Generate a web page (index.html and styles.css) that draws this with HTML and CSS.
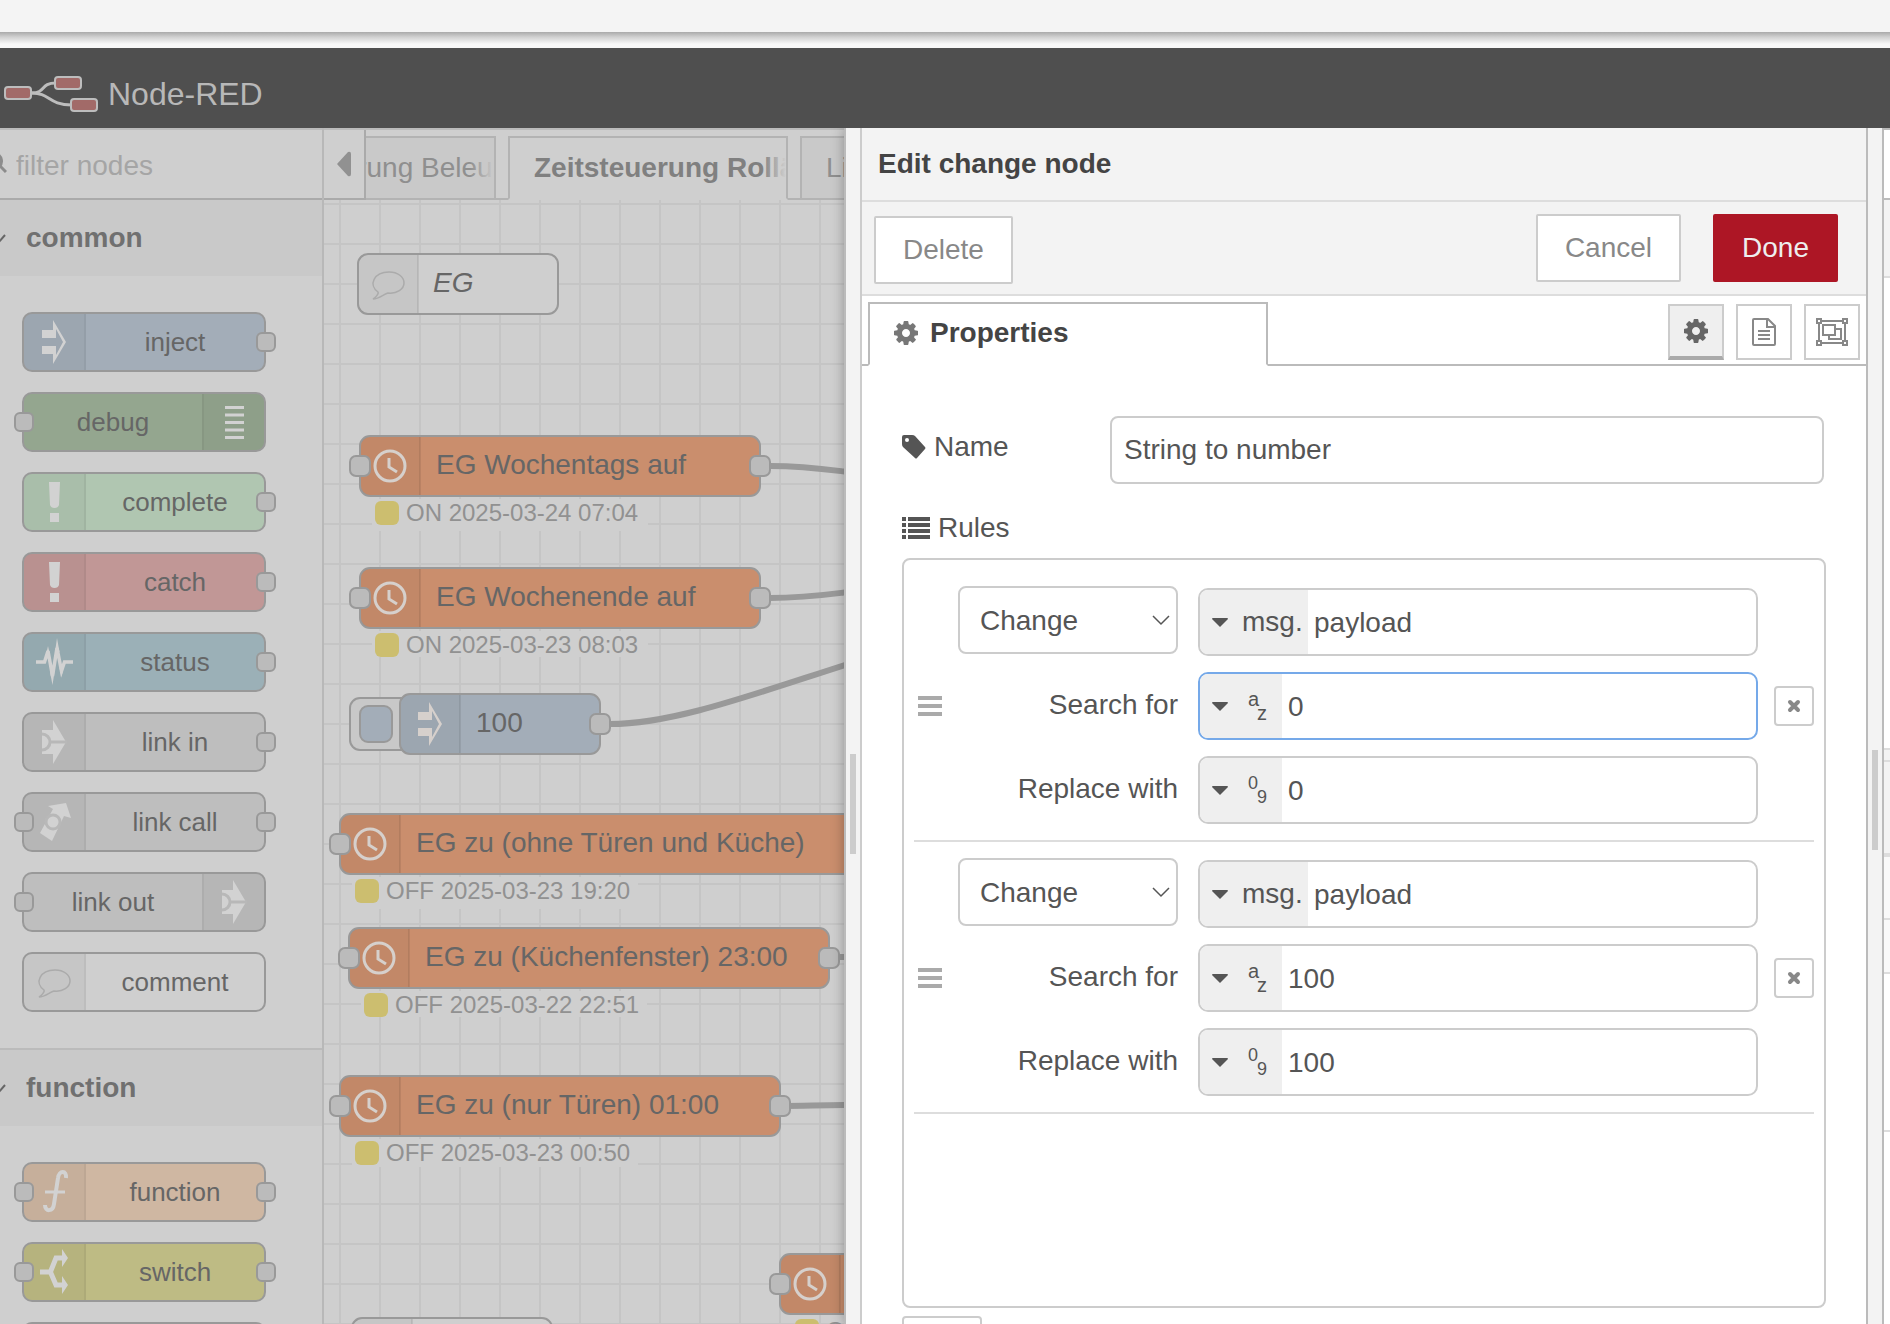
FILE: index.html
```html
<!DOCTYPE html>
<html lang="en">
<head>
    <meta charset="utf-8">
    <title>Node-RED</title>
    <link rel="stylesheet" href="styles.css">
</head>
<body>
    <!-- shared icons -->
    <svg class="icon-defs" width="0" height="0" aria-hidden="true">
        <symbol id="icon-inject" viewBox="0 0 60 56">
            <path fill="currentColor" d="M29 6L42 28L29 50V40H18V32H32V41L39 28L32 15V24H18V16H29Z"/>
        </symbol>
        <symbol id="icon-debug" viewBox="0 0 60 56">
            <path fill="currentColor" d="M21 12h19v3h-19zM21 19.500h19v3h-19zM21 27h19v3h-19zM21 34.500h19v3h-19zM21 42h19v3h-19z"/>
        </symbol>
        <symbol id="icon-alert" viewBox="0 0 60 56">
            <path fill="currentColor" d="M25 8H36L35 31Q34 34 30.500 34Q27 34 26 31ZM26 39h9v9h-9z"/>
        </symbol>
        <symbol id="icon-status" viewBox="0 0 60 56">
            <path fill="none" stroke="currentColor" stroke-width="3.500" stroke-miterlimit="4" d="M12 28H20.500L24 17L28.500 42L33 14L37.500 37L40.500 28H49"/>
            <path fill="currentColor" d="M22 21L24 12L26 21ZM26 38L28.500 51L30.500 38ZM31 18L33 4L35.500 18ZM35.500 34L37.500 43L39.500 34Z"/>
        </symbol>
        <symbol id="icon-link" viewBox="0 0 60 56">
            <path fill="currentColor" d="M18 16H29V6L42 28L29 50V40H18Z"/>
            <path fill="none" stroke="#b8b8b8" stroke-width="3" d="M18 20a8 8 0 0 1 0 16M26 28H43"/>
        </symbol>
        <symbol id="icon-link-call" viewBox="0 0 60 56">
            <path fill="currentColor" d="M24 12L42 9L47 24L40 22L28 47L16 39L29 15Z"/>
            <circle cx="29" cy="28" r="7" fill="currentColor" stroke="#b8b8b8" stroke-width="3"/>
        </symbol>
        <symbol id="icon-comment" viewBox="0 0 60 56">
            <path fill="none" stroke="#ababab" stroke-width="1.500" d="M20 36C10 29 16 16 31 16C40 16 46 21 46 27C46 33 39 38 30 37C26 38 21 43 15 43C17 42 21 38 20 36Z"/>
        </symbol>
        <symbol id="icon-function" viewBox="0 0 60 56">
            <path fill="none" stroke="currentColor" stroke-width="4" d="M42 14C43 6 35 6 34 14L30 40C29 48 21 48 21 41"/>
            <path fill="none" stroke="currentColor" stroke-width="3" d="M21 28H41"/>
        </symbol>
        <symbol id="icon-switch" viewBox="0 0 60 56">
            <path fill="none" stroke="currentColor" stroke-width="5" d="M16 28H27M26 29L32 14H39M26 27L32 41H39"/>
            <path fill="currentColor" d="M38 5L44 14L38 23ZM38 32L44 41L38 50Z"/>
        </symbol>
        <symbol id="icon-clock" viewBox="0 0 60 60">
            <circle cx="30" cy="30" r="15" fill="none" stroke="currentColor" stroke-width="3"/>
            <path fill="none" stroke="currentColor" stroke-width="3" d="M29 22V31L37 36"/>
        </symbol>
        <symbol id="icon-cog" viewBox="0 128 1536 1536">
            <path fill="currentColor" d="M1024 896q0-106-75-181t-181-75-181 75-75 181 75 181 181 75 181-75 75-181zm512-109v222q0 12-8 23t-20 13l-185 28q-19 54-39 91 35 50 107 138 10 12 10 25t-9 23q-27 37-99 108t-94 71q-12 0-26-9l-138-108q-44 23-91 38-16 136-29 186-7 28-36 28h-222q-14 0-24.500-8.500t-11.500-21.500l-28-184q-49-16-90-37l-141 107q-10 9-25 9-14 0-25-11-126-114-165-168-7-10-7-23 0-12 8-23 15-21 51-66.500t54-70.500q-27-50-41-99l-183-27q-13-2-21-12.500t-8-23.500v-222q0-12 8-23t19-13l186-28q14-46 39-92-40-57-107-138-10-12-10-24 0-10 9-23 26-36 98.500-107.500t94.500-71.500q13 0 26 10l138 107q44-23 91-38 16-136 29-186 7-28 36-28h222q14 0 24.500 8.500t11.500 21.500l28 184q49 16 90 37l142-107q9-9 24-9 13 0 25 10 129 119 165 170 7 8 7 22 0 12-8 23-15 21-51 66.500t-54 70.500q26 50 41 98l183 28q13 2 21 12.500t8 23.500z"/>
        </symbol>
        <symbol id="icon-times" viewBox="0 0 14 14">
            <path fill="none" stroke="currentColor" stroke-width="4" stroke-linecap="round" d="M3 3L11 11M11 3L3 11"/>
        </symbol>
        <symbol id="icon-caret" viewBox="0 0 16 9">
            <path fill="currentColor" d="M1 0H15Q16 0 16 1L8 9L0 1Q0 0 1 0Z"/>
        </symbol>
        <symbol id="icon-chevron" viewBox="0 0 18 11">
            <path fill="none" stroke="currentColor" stroke-width="1.500" d="M1 1L9 9L17 1"/>
        </symbol>
        <symbol id="icon-bars" viewBox="0 0 24 20">
            <path fill="currentColor" d="M0 0h24v4H0zM0 8h24v4H0zM0 16h24v4H0z"/>
        </symbol>
    </svg>

    <div class="browser-bar"></div>

    <header class="header">
        <svg class="logo" width="96" height="38" viewBox="0 0 96 38">
            <g fill="none" stroke="#bdbdbd" stroke-width="3">
                <path d="M28 18C42 18 36 8 52 8"/>
                <path d="M28 18C46 18 44 30 68 30"/>
            </g>
            <g fill="#a26a68" stroke="#bdbdbd" stroke-width="2">
                <rect x="1" y="12" width="26" height="12" rx="3"/>
                <rect x="51" y="2" width="26" height="12" rx="3"/>
                <rect x="67" y="24" width="26" height="12" rx="3"/>
            </g>
        </svg>
        <span class="title">Node-RED</span>
    </header>

    <main class="editor">
        <aside class="palette">
            <div class="palette-search">
                <svg class="search-icon" width="7" height="24" viewBox="0 0 7 24"><path fill="none" stroke="#8c8c8c" stroke-width="3" d="M-3 2A8 8 0 0 1 -1 15M0 14L6 20"/></svg>
                <input type="text" placeholder="filter nodes" aria-label="filter nodes">
            </div>

            <h2 class="palette-header"><svg width="6" height="10" viewBox="0 0 6 10"><path fill="none" stroke="#666" stroke-width="2" d="M-1 9L5 2"/></svg>common</h2>
            <div class="palette-nodes">
                <div class="node inject"><svg class="node-icon"><use href="#icon-inject"/></svg><span>inject</span><i class="port out"></i></div>
                <div class="node debug right"><svg class="node-icon"><use href="#icon-debug"/></svg><span>debug</span><i class="port in"></i></div>
                <div class="node complete"><svg class="node-icon"><use href="#icon-alert"/></svg><span>complete</span><i class="port out"></i></div>
                <div class="node catch"><svg class="node-icon"><use href="#icon-alert"/></svg><span>catch</span><i class="port out"></i></div>
                <div class="node status"><svg class="node-icon"><use href="#icon-status"/></svg><span>status</span><i class="port out"></i></div>
                <div class="node link"><svg class="node-icon"><use href="#icon-link"/></svg><span>link in</span><i class="port out"></i></div>
                <div class="node link"><svg class="node-icon"><use href="#icon-link-call"/></svg><span>link call</span><i class="port in"></i><i class="port out"></i></div>
                <div class="node link right"><svg class="node-icon"><use href="#icon-link"/></svg><span>link out</span><i class="port in"></i></div>
                <div class="node comment"><svg class="node-icon"><use href="#icon-comment"/></svg><span>comment</span></div>
            </div>

            <h2 class="palette-header"><svg width="6" height="10" viewBox="0 0 6 10"><path fill="none" stroke="#666" stroke-width="2" d="M-1 9L5 2"/></svg>function</h2>
            <div class="palette-nodes">
                <div class="node function"><svg class="node-icon"><use href="#icon-function"/></svg><span>function</span><i class="port in"></i><i class="port out"></i></div>
                <div class="node switch"><svg class="node-icon"><use href="#icon-switch"/></svg><span>switch</span><i class="port in"></i><i class="port out"></i></div>
                <div class="node link"></div>
            </div>
        </aside>

        <section class="workspace">
            <div class="tab-bar">
                <button class="tab-scroll" aria-label="Scroll tabs left">
                    <svg width="14" height="26" viewBox="0 0 14 26"><path fill="#919191" d="M0 13L11 1Q14 0 14 3V23Q14 26 11 25Z"/></svg>
                </button>
                <div class="tabs">
                    <div class="tab-list">
                        <a class="tab" href="#">Zeitsteuerung Beleuchtung</a>
                        <a class="tab active" href="#">Zeitsteuerung Rolläden</a>
                        <a class="tab" href="#">Licht</a>
                    </div>
                </div>
            </div>

            <svg class="canvas">
                <defs>
                    <pattern id="grid" x="15" y="3" width="40" height="40" patternUnits="userSpaceOnUse">
                        <path fill="#c5c5c5" d="M0 0H40V2H2V40H0Z"/>
                    </pattern>
                    <!-- darker icon area at the left of a node -->
                    <g id="shade">
                        <path fill="#000" fill-opacity="0.04" d="M10 1H60V59H10Q1 59 1 50V10Q1 1 10 1Z"/>
                        <path fill="#000" fill-opacity="0.08" d="M59 1H61V59H59Z"/>
                    </g>
                </defs>
                <rect width="100%" height="100%" fill="url(#grid)"/>

                <g class="wires">
                    <path d="M446 266C480 266 500 269 524 272"/>
                    <path d="M446 398C480 398 500 395 524 392"/>
                    <path d="M286 524C350 524 430 494 524 464"/>
                    <path d="M514 757H530"/>
                    <path d="M456 906C480 906 500 905 530 905"/>
                </g>

                <g class="flow-node comment" transform="translate(34 54)">
                    <rect class="box" width="200" height="60" rx="10"/>
                    <use href="#shade"/>
                    <use href="#icon-comment" y="2" width="60" height="56"/>
                    <text class="label" x="75" y="38">EG</text>
                </g>

                <g class="flow-node timer" transform="translate(36 236)">
                    <rect class="box" width="400" height="60" rx="10"/>
                    <use href="#shade"/>
                    <use href="#icon-clock" width="60" height="60"/>
                    <text class="label" x="76" y="38">EG Wochentags auf</text>
                    <rect class="flow-port" x="-10" y="20" width="20" height="20" rx="6"/>
                    <rect class="flow-port" x="390" y="20" width="20" height="20" rx="6"/>
                    <rect class="status-bg" x="12" y="63" width="276" height="32"/>
                    <rect class="dot" x="15" y="65" width="24" height="24" rx="6"/>
                    <text class="status-text" x="46" y="85">ON 2025-03-24 07:04</text>
                </g>

                <g class="flow-node timer" transform="translate(36 368)">
                    <rect class="box" width="400" height="60" rx="10"/>
                    <use href="#shade"/>
                    <use href="#icon-clock" width="60" height="60"/>
                    <text class="label" x="76" y="38">EG Wochenende auf</text>
                    <rect class="flow-port" x="-10" y="20" width="20" height="20" rx="6"/>
                    <rect class="flow-port" x="390" y="20" width="20" height="20" rx="6"/>
                    <rect class="status-bg" x="12" y="63" width="276" height="26"/>
                    <rect class="dot" x="15" y="65" width="24" height="24" rx="6"/>
                    <text class="status-text" x="46" y="85">ON 2025-03-23 08:03</text>
                </g>

                <g class="flow-node inject" transform="translate(76 494)">
                    <rect class="button-bg" x="-50" y="4" width="70" height="52" rx="10"/>
                    <rect class="box" x="-40" y="12" width="32" height="36" rx="8"/>
                    <rect class="box" width="200" height="60" rx="10"/>
                    <use href="#shade"/>
                    <use href="#icon-inject" y="2" width="60" height="56"/>
                    <text class="label" x="76" y="38">100</text>
                    <rect class="flow-port" x="190" y="20" width="20" height="20" rx="6"/>
                </g>

                <g class="flow-node timer" transform="translate(16 614)">
                    <rect class="box" width="560" height="60" rx="10"/>
                    <use href="#shade"/>
                    <use href="#icon-clock" width="60" height="60"/>
                    <text class="label" x="76" y="38">EG zu (ohne Türen und Küche)</text>
                    <rect class="flow-port" x="-10" y="20" width="20" height="20" rx="6"/>
                    <rect class="status-bg" x="12" y="63" width="286" height="32"/>
                    <rect class="dot" x="15" y="65" width="24" height="24" rx="6"/>
                    <text class="status-text" x="46" y="85">OFF 2025-03-23 19:20</text>
                </g>

                <g class="flow-node timer" transform="translate(25 728)">
                    <rect class="box" width="480" height="60" rx="10"/>
                    <use href="#shade"/>
                    <use href="#icon-clock" width="60" height="60"/>
                    <text class="label" x="76" y="38">EG zu (Küchenfenster) 23:00</text>
                    <rect class="flow-port" x="-10" y="20" width="20" height="20" rx="6"/>
                    <rect class="flow-port" x="470" y="20" width="20" height="20" rx="6"/>
                    <rect class="status-bg" x="12" y="63" width="286" height="26"/>
                    <rect class="dot" x="15" y="65" width="24" height="24" rx="6"/>
                    <text class="status-text" x="46" y="85">OFF 2025-03-22 22:51</text>
                </g>

                <g class="flow-node timer" transform="translate(16 876)">
                    <rect class="box" width="440" height="60" rx="10"/>
                    <use href="#shade"/>
                    <use href="#icon-clock" width="60" height="60"/>
                    <text class="label" x="76" y="38">EG zu (nur Türen) 01:00</text>
                    <rect class="flow-port" x="-10" y="20" width="20" height="20" rx="6"/>
                    <rect class="flow-port" x="430" y="20" width="20" height="20" rx="6"/>
                    <rect class="status-bg" x="12" y="63" width="286" height="28"/>
                    <rect class="dot" x="15" y="65" width="24" height="24" rx="6"/>
                    <text class="status-text" x="46" y="85">OFF 2025-03-23 00:50</text>
                </g>

                <g class="flow-node timer" transform="translate(456 1054)">
                    <rect class="box" width="400" height="60" rx="10"/>
                    <use href="#shade"/>
                    <use href="#icon-clock" width="60" height="60"/>
                    <rect class="flow-port" x="-10" y="20" width="20" height="20" rx="6"/>
                    <rect class="dot" x="15" y="65" width="24" height="24" rx="6"/>
                    <text class="status-text" x="46" y="85">OFF</text>
                </g>

                <g class="flow-node comment" transform="translate(28 1118)">
                    <rect class="box" width="200" height="60" rx="10"/>
                    <use href="#shade"/>
                </g>
            </svg>
        </section>

        <section class="tray">
            <div class="resize"><span class="grip"></span></div>
            <div class="tray-content">
                <h1 class="tray-header">Edit change node</h1>
                <div class="tray-toolbar">
                    <button class="btn delete">Delete</button>
                    <button class="btn cancel">Cancel</button>
                    <button class="btn primary">Done</button>
                </div>
                <div class="tray-tabs">
                    <a class="tray-tab" href="#"><svg width="24" height="24"><use href="#icon-cog"/></svg>Properties</a>
                    <div class="tray-tab-buttons">
                        <button class="icon-btn selected" aria-label="Properties"><svg width="24" height="24"><use href="#icon-cog"/></svg></button>
                        <button class="icon-btn" aria-label="Description">
                            <svg width="24" height="28" viewBox="0 0 24 28"><path fill="none" stroke="currentColor" stroke-width="2" d="M2 1H16L23 8V26Q23 27 22 27H2Q1 27 1 26V2Q1 1 2 1ZM15 1V9H23M6 13H18M6 17H18M6 21H18"/></svg>
                        </button>
                        <button class="icon-btn" aria-label="Appearance">
                            <svg width="32" height="28" viewBox="0 0 32 28"><g fill="none" stroke="currentColor" stroke-width="2"><path d="M6 3H26M6 25H26M3 6V22M29 6V22M7 7H19V17H7ZM20 11H25V21H13V18"/><path d="M1 1H5V5H1ZM27 1H31V5H27ZM1 23H5V27H1ZM27 23H31V27H27Z"/></g></svg>
                        </button>
                    </div>
                </div>

                <form class="tray-body">
                    <div class="form-row">
                        <label for="node-name">
                            <svg width="24" height="24" viewBox="0 0 24 24"><path fill="#555" fill-rule="evenodd" d="M2 0H10Q12 0 13 1L23 12Q24 13 23 14L15 23Q14 24 13 23L1 12Q0 11 0 9V2Q0 0 2 0ZM5 3A2 2 0 1 0 5 7A2 2 0 1 0 5 3Z"/></svg>Name
                        </label>
                        <input type="text" id="node-name" value="String to number">
                    </div>
                    <div class="rules-label">
                        <svg width="28" height="22" viewBox="0 0 28 22"><path fill="#555" d="M0 0h4v4H0zM6 0h22v4H6zM0 6h4v4H0zM6 6h22v4H6zM0 12h4v4H0zM6 12h22v4H6zM0 18h4v4H0zM6 18h22v4H6z"/></svg>Rules
                    </div>

                    <ol class="rules">
                        <li class="rule">
                            <svg class="handle" width="24" height="20"><use href="#icon-bars"/></svg>
                            <div class="rule-rows">
                                <div class="rule-row">
                                    <div class="select"><select aria-label="Action"><option>Change</option><option>Set</option><option>Delete</option><option>Move</option></select><svg width="18" height="11"><use href="#icon-chevron"/></svg></div>
                                    <div class="typed"><button type="button"><svg width="16" height="9"><use href="#icon-caret"/></svg>msg.</button><input type="text" value="payload" aria-label="Property"></div>
                                </div>
                                <div class="rule-row">
                                    <label for="search-1">Search for</label>
                                    <div class="typed focused"><button type="button" class="narrow" aria-label="string"><svg width="16" height="9"><use href="#icon-caret"/></svg><span class="type-az"><span>a</span><span>z</span></span></button><input type="text" id="search-1" value="0"></div>
                                </div>
                                <div class="rule-row">
                                    <label for="replace-1">Replace with</label>
                                    <div class="typed"><button type="button" class="narrow" aria-label="number"><svg width="16" height="9"><use href="#icon-caret"/></svg><span class="type-az num"><span>0</span><span>9</span></span></button><input type="text" id="replace-1" value="0"></div>
                                </div>
                            </div>
                            <button type="button" class="remove" aria-label="Remove rule"><svg width="14" height="14"><use href="#icon-times"/></svg></button>
                        </li>
                        <li class="rule">
                            <svg class="handle" width="24" height="20"><use href="#icon-bars"/></svg>
                            <div class="rule-rows">
                                <div class="rule-row">
                                    <div class="select"><select aria-label="Action"><option>Change</option><option>Set</option><option>Delete</option><option>Move</option></select><svg width="18" height="11"><use href="#icon-chevron"/></svg></div>
                                    <div class="typed"><button type="button"><svg width="16" height="9"><use href="#icon-caret"/></svg>msg.</button><input type="text" value="payload" aria-label="Property"></div>
                                </div>
                                <div class="rule-row">
                                    <label for="search-2">Search for</label>
                                    <div class="typed"><button type="button" class="narrow" aria-label="string"><svg width="16" height="9"><use href="#icon-caret"/></svg><span class="type-az"><span>a</span><span>z</span></span></button><input type="text" id="search-2" value="100"></div>
                                </div>
                                <div class="rule-row">
                                    <label for="replace-2">Replace with</label>
                                    <div class="typed"><button type="button" class="narrow" aria-label="number"><svg width="16" height="9"><use href="#icon-caret"/></svg><span class="type-az num"><span>0</span><span>9</span></span></button><input type="text" id="replace-2" value="100"></div>
                                </div>
                            </div>
                            <button type="button" class="remove" aria-label="Remove rule"><svg width="14" height="14"><use href="#icon-times"/></svg></button>
                        </li>
                    </ol>
                    <button type="button" class="add" aria-label="Add rule"></button>
                </form>
            </div>
        </section>

        <aside class="sidebar">
            <div class="resize"><span class="grip"></span></div>
            <div class="sidebar-content">
                <div class="side-tabs"></div>
                <div class="side-toolbar"></div>
                <div class="side-tree"></div>
                <div class="side-gap"></div>
                <div class="side-info"></div>
                <div class="side-line"></div>
                <div class="side-line short"></div>
                <div class="side-rest"></div>
            </div>
        </aside>
    </main>
</body>
</html>
```

FILE: styles.css
```css
* {
    box-sizing: border-box;
}
body {
    display: flex;
    flex-direction: column;
    height: 100vh;
    margin: 0;
    overflow: hidden;
    background: #fff;
    color: #555;
    font-family: "Liberation Sans", Arial, sans-serif;
    font-size: 28px;
    line-height: 40px;
}
input,
select,
button {
    margin: 0;
    color: inherit;
    font: inherit;
}
input {
    outline: none;
}
a {
    color: inherit;
    text-decoration: none;
}
svg {
    display: block;
    flex: none;
}
.icon-defs {
    position: absolute;
}

/* top of the window */
.browser-bar {
    flex: none;
    height: 48px;
    background: linear-gradient(#aaa, #d0d0d0 5px, #f8f8f8 12px) 0 32px no-repeat #f4f4f4;
}
.header {
    display: flex;
    flex: none;
    align-items: center;
    gap: 8px;
    height: 80px;
    padding: 0 4px;
    background: #4f4f4f;
}
.logo {
    margin-top: 12px;
}
.title {
    margin-top: 12px;
    color: #b8b8b8;
    font-size: 32px;
}

.editor {
    display: grid;
    flex: 1;
    grid-template-columns: 324px minmax(0, 1fr) 1022px 24px;
    grid-template-rows: minmax(0, 1fr);
    min-height: 0;
}

/* palette */
.palette {
    overflow: hidden;
    border-right: 2px solid #b8b8b8;
    background: #cfcfcf;
}
.palette-search {
    display: flex;
    align-items: center;
    height: 72px;
    border-top: 2px solid #bbb;
    border-bottom: 2px solid #aaa;
}
.palette-search input {
    flex: 1;
    min-width: 0;
    padding: 4px 9px 0;
    border: none;
    background: none;
}
.palette-search input::placeholder {
    color: #a5a5a5;
    opacity: 1;
}
.palette-header {
    display: flex;
    align-items: center;
    gap: 20px;
    height: 76px;
    margin: 0;
    background: #c9c9c9;
    color: #707070;
    font-size: 28px;
}
.palette-nodes {
    display: flex;
    flex-direction: column;
    gap: 20px;
    padding: 36px 56px 36px 22px;
    border-bottom: 2px solid #bbb;
}
.node {
    position: relative;
    display: flex;
    align-items: center;
    height: 60px;
    border: 2px solid #999;
    border-radius: 10px;
    color: #666;
    font-size: 26px;
}
.node span {
    flex: 1;
    text-align: center;
}
.node.right {
    flex-direction: row-reverse;
}
.node-icon {
    width: 62px;
    height: 56px;
    border-right: 2px solid rgba(0, 0, 0, 0.05);
    border-radius: 8px 0 0 8px;
    background: rgba(0, 0, 0, 0.04);
    color: #d2d2d2;
}
.node.right .node-icon {
    border-right: none;
    border-left: 2px solid rgba(0, 0, 0, 0.05);
    border-radius: 0 8px 8px 0;
}
.port {
    position: absolute;
    top: 18px;
    width: 20px;
    height: 20px;
    border: 2px solid #999;
    border-radius: 6px;
    background: #bbb;
}
.port.in {
    left: -10px;
}
.port.out {
    right: -12px;
}
.node.inject { background: #a3adb8; }
.node.debug { background: #94a68f; }
.node.complete { background: #b0c6b1; }
.node.catch { background: #c19796; }
.node.status { background: #9bb0b7; }
.node.link { background: #bebebe; }
.node.function { background: #cfb7a2; }
.node.switch { background: #bebb84; }

/* workspace */
.workspace {
    display: flex;
    flex-direction: column;
    background: #cfcfcf;
}
.tab-bar {
    display: flex;
    flex: none;
    height: 72px;
    border-top: 2px solid #bbb;
}
.tab-scroll {
    display: flex;
    align-items: center;
    justify-content: center;
    width: 42px;
    padding: 0;
    border: solid #aaa;
    border-width: 0 2px 2px 0;
    background: none;
}
.tabs {
    flex: 1;
    overflow: hidden;
    box-shadow: inset 0 -2px #b3b3b3;
}
.tab-list {
    display: flex;
    gap: 12px;
    margin: 6px 0 0 -150px;
}
.tab {
    position: relative;
    flex: none;
    width: 280px;
    height: 64px;
    padding: 10px 0 10px 24px;
    overflow: hidden;
    border: 2px solid #b3b3b3;
    background: #c9c9c9;
    color: #8f8f8f;
    white-space: nowrap;
}
.tab::after {
    position: absolute;
    top: 0;
    right: 0;
    width: 24px;
    height: 100%;
    background: linear-gradient(to right, rgba(201, 201, 201, 0), #c9c9c9);
    content: "";
}
.tab.active {
    border-bottom-color: #cfcfcf;
    background: #cfcfcf;
    color: #808080;
    font-weight: bold;
}
.tab.active::after {
    background: linear-gradient(to right, rgba(207, 207, 207, 0), #cfcfcf);
}
.canvas {
    flex: 1;
    width: 100%;
    min-height: 0;
}
.wires path {
    fill: none;
    stroke: #999;
    stroke-width: 6;
}
.flow-node {
    color: #d6d0cc;
}
.box {
    stroke: #999;
    stroke-width: 2;
}
.comment .box { fill: #cfcfcf; }
.timer .box { fill: #ca8e6d; }
.inject .box { fill: #a3adb8; }
.button-bg {
    fill: #c8c8c8;
    stroke: #999;
    stroke-width: 2;
}
.flow-port {
    fill: #bbb;
    stroke: #999;
    stroke-width: 2;
}
.label {
    fill: #666;
    font-size: 28px;
}
.comment .label {
    font-style: italic;
}
.status-bg {
    fill: #cfcfcf;
}
.dot {
    fill: #ccbe6f;
}
.status-text {
    fill: #919191;
    font-size: 24px;
}

/* resize bars */
.resize {
    display: flex;
    flex: none;
    align-items: center;
    justify-content: center;
    width: 18px;
    padding-top: 148px;
    border: solid #bbb;
    border-width: 0 2px;
    background: #f3f3f3;
}
.grip {
    width: 6px;
    height: 100px;
    background: #ccc;
}

/* edit tray */
.tray {
    z-index: 1;
    display: flex;
    background: #fff;
    box-shadow: 0 0 12px rgba(0, 0, 0, 0.3);
    clip-path: inset(0 0 0 -20px);
}
.tray .resize {
    padding-top: 156px;
    border-right-color: #ccc;
}
.tray-content {
    display: flex;
    flex: 1;
    flex-direction: column;
    min-width: 0;
}
.tray-header {
    flex: none;
    height: 74px;
    margin: 0;
    padding: 16px 16px;
    border-bottom: 2px solid #ddd;
    background: #f3f3f3;
    color: #444;
    font-size: 28px;
}
.tray-toolbar {
    display: flex;
    flex: none;
    height: 94px;
    padding: 12px 28px 12px 12px;
    border-bottom: 2px solid #ddd;
    background: #f3f3f3;
}
.btn {
    height: 68px;
    padding: 0 27px;
    border: 2px solid #ccc;
    border-radius: 2px;
    background: #fff;
    color: #888;
}
.delete {
    margin: 2px auto 0 0;
}
.primary {
    margin-left: 32px;
    border-color: #ad1625;
    background: #ad1625;
    color: #eee;
}
.tray-tabs {
    display: flex;
    flex: none;
    justify-content: space-between;
    height: 70px;
    padding: 6px 6px 0;
    box-shadow: inset 0 -2px #bbb;
}
.tray-tab {
    display: flex;
    align-items: center;
    gap: 12px;
    width: 400px;
    height: 64px;
    padding: 0 24px 2px;
    border: 2px solid #bbb;
    border-bottom-color: #fff;
    background: #fff;
    color: #444;
    font-weight: bold;
}
.tray-tab svg {
    color: #777;
}
.tray-tab-buttons {
    display: flex;
    gap: 12px;
    padding-top: 2px;
}
.icon-btn {
    display: flex;
    align-items: center;
    justify-content: center;
    width: 56px;
    height: 56px;
    padding: 0;
    border: 2px solid #ccc;
    background: #fff;
    color: #888;
}
.icon-btn.selected {
    border-bottom: 4px solid #aaa;
    background: #efefef;
    color: #666;
}

/* form */
.tray-body {
    display: flex;
    flex: 1;
    flex-direction: column;
    min-height: 0;
    padding: 50px 40px 0;
    overflow: hidden;
}
.form-row {
    display: flex;
    flex: none;
    padding-right: 2px;
}
.form-row label {
    display: flex;
    align-items: center;
    gap: 8px;
    width: 208px;
    height: 62px;
}
.form-row input {
    flex: 1;
    min-width: 0;
    height: 68px;
    padding: 0 12px;
    border: 2px solid #ccc;
    border-radius: 8px;
    background: #fff;
}
.rules-label {
    display: flex;
    flex: none;
    align-items: center;
    gap: 8px;
    height: 74px;
    padding-top: 14px;
}
.rules {
    flex: none;
    height: 750px;
    margin: 0;
    padding: 10px;
    border: 2px solid #ccc;
    border-radius: 8px;
    list-style: none;
}
.rule {
    display: flex;
    align-items: center;
    gap: 16px;
    padding: 18px 0 16px 4px;
    border-bottom: 2px solid #ddd;
}
.handle {
    color: #aaa;
}
.rule-rows {
    display: flex;
    flex: 1;
    flex-direction: column;
    gap: 16px;
}
.rule-row {
    display: grid;
    grid-template-columns: 220px 1fr;
    gap: 20px;
    height: 68px;
}
.rule-row label {
    padding-top: 13px;
    text-align: right;
}
.select {
    position: relative;
    margin-top: -2px;
}
.select select {
    width: 100%;
    height: 68px;
    padding: 2px 20px 0;
    appearance: none;
    border: 2px solid #ccc;
    border-radius: 8px;
    background: #fff;
}
.select svg {
    position: absolute;
    top: 29px;
    right: 8px;
    pointer-events: none;
}
.typed {
    display: flex;
    overflow: hidden;
    border: 2px solid #ccc;
    border-radius: 10px;
    background: #fff;
}
.typed.focused {
    border-color: #75a9e9;
}
.typed button {
    display: flex;
    flex: none;
    align-items: center;
    gap: 14px;
    width: 108px;
    padding: 0 0 0 12px;
    border: none;
    background: #efefef;
}
.typed .narrow {
    gap: 20px;
    width: 82px;
}
.typed input {
    flex: 1;
    min-width: 0;
    padding: 2px 6px 0;
    border: none;
    background: none;
}
.type-az {
    display: grid;
    grid-template-columns: 9px 10px;
    font-size: 20px;
    line-height: 14px;
}
.type-az span:last-child {
    grid-area: 2 / 2;
}
.type-az.num {
    font-size: 18px;
}
.remove {
    display: flex;
    align-items: center;
    justify-content: center;
    width: 40px;
    height: 40px;
    padding: 0;
    border: 2px solid #ccc;
    border-radius: 4px;
    background: #fff;
    color: #888;
}
.add {
    flex: none;
    width: 80px;
    height: 56px;
    margin-top: 8px;
    border: 2px solid #ccc;
    border-radius: 4px;
    background: #fff;
}

/* sidebar */
.sidebar {
    display: flex;
}
.sidebar-content {
    flex: 1;
    display: flex;
    flex-direction: column;
    border-top: 2px solid #bbb;
}
.sidebar-content div {
    flex: none;
    border-bottom: 2px solid #ddd;
}
.side-tabs {
    height: 70px;
}
.sidebar-content .side-tabs {
    border-bottom-color: #bbb;
}
.side-toolbar {
    height: 78px;
    background: #f3f3f3;
}
.side-tree {
    height: 472px;
}
.side-gap {
    height: 12px;
    background: #f3f3f3;
}
.sidebar-content .side-info {
    height: 95px;
    border-bottom-width: 4px;
    background: #f3f3f3;
}
.side-line {
    height: 63px;
    background: #f9f9f9;
}
.side-line.short {
    height: 54px;
}
.side-rest {
    height: 158px;
}
```
